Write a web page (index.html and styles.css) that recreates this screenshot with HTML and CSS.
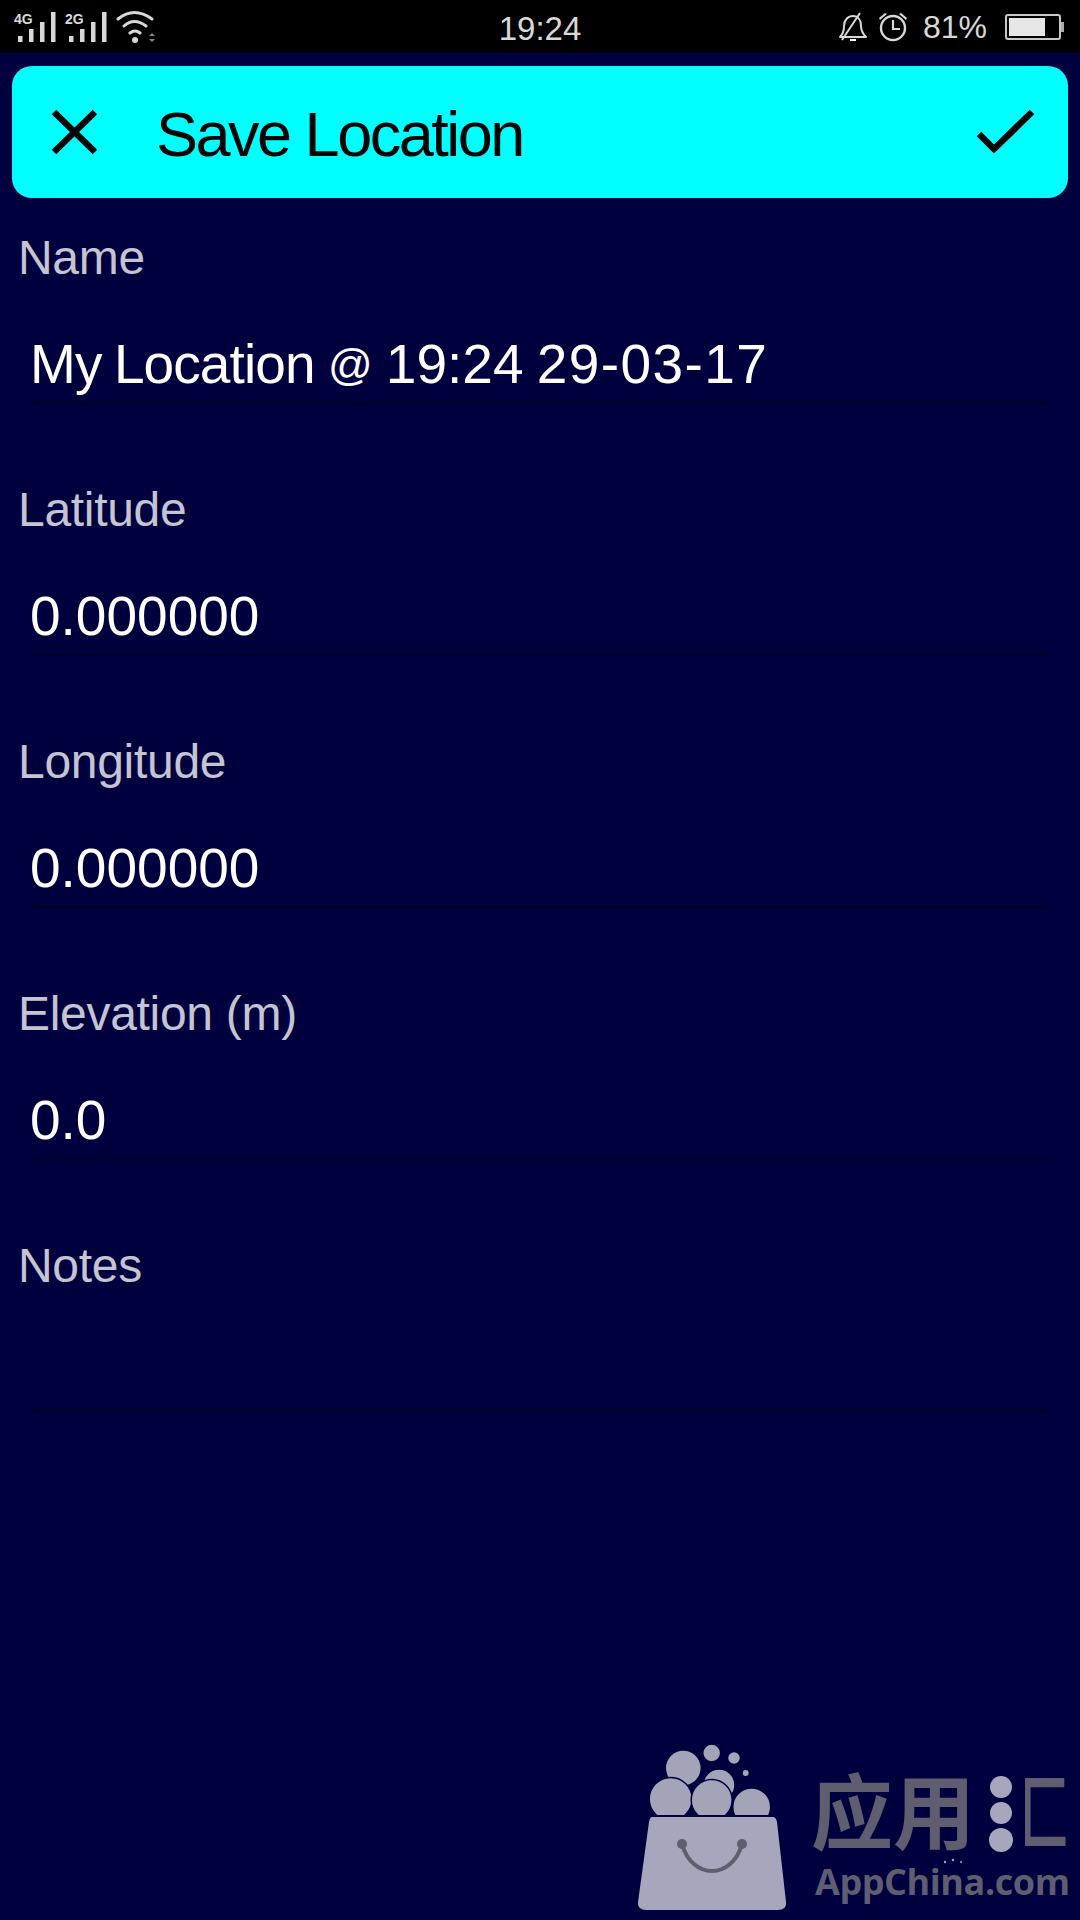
FILE: index.html
```html
<!DOCTYPE html>
<html lang="en">
<head>
  <meta charset="UTF-8">
  <meta name="viewport" content="width=device-width, initial-scale=1.0">
  <title>Save Location</title>
  <link rel="stylesheet" href="styles.css">
</head>
<body>

<div class="statusbar">
  <div class="status-left">
    <svg class="signal" width="44" height="34" viewBox="0 0 44 34">
      <text x="0" y="13" class="net-label">4G</text>
      <path d="M4 25h4.500v6H4zM15 18h4.500v13H15zM26 11h4.500v20H26zM37 1h4.500v30H37z" fill="#d8d8d8"/>
    </svg>
    <svg class="signal" width="44" height="34" viewBox="0 0 44 34">
      <text x="0" y="13" class="net-label">2G</text>
      <path d="M4 25h4.500v6H4zM15 18h4.500v13H15zM26 11h4.500v20H26zM37 1h4.500v30H37z" fill="#d8d8d8"/>
    </svg>
    <svg class="wifi" width="42" height="36" viewBox="0 0 42 36">
      <path d="M2 10Q18 -3 36 10M8 17Q18 8 30 17M14 24Q19 20 24 24" fill="none" stroke="#d8d8d8" stroke-width="3" stroke-linecap="round"/>
      <circle cx="19" cy="31" r="3" fill="#d8d8d8"/>
      <path d="M33 27l3-3 3 3zM33 30l3 3 3-3z" fill="#888"/>
    </svg>
  </div>
  <div class="status-time">19:24</div>
  <div class="status-right">
    <svg width="30" height="32" viewBox="0 0 30 32">
      <path d="M2 26c3-3 4-6 4-11 0-6 4-10 9-10s8 4 8 10c0 5 2 8 5 11z" fill="none" stroke="#d8d8d8" stroke-width="2" stroke-linejoin="round"/>
      <path d="M4 29L22 2" stroke="#d8d8d8" stroke-width="2"/>
      <path d="M12 29h6" stroke="#fff" stroke-width="2"/>
    </svg>
    <svg class="alarm" width="30" height="32" viewBox="0 0 30 32">
      <circle cx="15" cy="17" r="12" fill="none" stroke="#d8d8d8" stroke-width="2.4"/>
      <path d="M15 9v9h7" fill="none" stroke="#d8d8d8" stroke-width="2.2"/>
      <path d="M1 7l6-5 2 1-7 6zM29 7l-6-5-2 1 7 6z" fill="#d8d8d8"/>
    </svg>
    <span class="battery-text">81%</span>
    <div class="battery"><div class="battery-level" style="width: 75%"></div></div>
    <div class="battery-nib"></div>
  </div>
</div>

<div class="toolbar">
  <svg class="toolbar-close" width="47" height="46" viewBox="0 0 47 46">
    <path d="M3 3L44 43M44 3L3 43" fill="none" stroke="#050505" stroke-width="6.5"/>
  </svg>
  <h1 class="toolbar-title">Save Location</h1>
  <svg class="toolbar-done" width="60" height="46" viewBox="0 0 60 46">
    <path d="M3 25L18 40L56 3" fill="none" stroke="#050505" stroke-width="6.5"/>
  </svg>
</div>

<form class="form">
  <div class="field">
    <label class="field-label">Name</label>
    <div class="field-value name-value"><span class="tight">My Location</span> <span class="small-at">@</span> 19:24 <span class="wide">29-03-17</span></div>
  </div>
  <div class="field">
    <label class="field-label">Latitude</label>
    <div class="field-value">0.000000</div>
  </div>
  <div class="field">
    <label class="field-label">Longitude</label>
    <div class="field-value">0.000000</div>
  </div>
  <div class="field">
    <label class="field-label">Elevation (m)</label>
    <div class="field-value">0.0</div>
  </div>
  <div class="field">
    <label class="field-label">Notes</label>
    <div class="field-value"></div>
  </div>
</form>

<!-- site watermark, sits over the bottom corner -->
<svg class="watermark" width="460" height="190" viewBox="0 0 460 190">
  <defs>
    <clipPath id="bubble-clip"><rect x="0" y="0" width="200" height="85"/></clipPath>
  </defs>
  <g fill="#a4a4b8" stroke="#00003f" stroke-width="1.5" clip-path="url(#bubble-clip)">
    <circle cx="91.7" cy="23" r="9"/>
    <circle cx="114" cy="28" r="6.500"/>
    <circle cx="125.700" cy="43" r="3.700"/>
    <circle cx="63.300" cy="38" r="18"/>
    <circle cx="99" cy="55" r="16"/>
    <circle cx="131.700" cy="77" r="19"/>
    <circle cx="50.700" cy="69" r="21.500"/>
    <circle cx="91.700" cy="70" r="20.500"/>
  </g>
  <path d="M32 87H153Q156 87 157 92L166 172Q167 180 158 180H27Q17 180 18 172L29 92Q30 87 32 87z" fill="#a6a6bc"/>
  <path d="M62 114C72 150 112 150 122 114" fill="none" stroke="#5e5e70" stroke-width="4"/>
  <circle cx="62" cy="114" r="5" fill="#5e5e70"/>
  <circle cx="122" cy="114" r="5" fill="#5e5e70"/>
  <text x="191" y="113" class="wm-cjk">应用</text>
  <text transform="translate(400 113) scale(0.6 1)" class="wm-cjk">匚</text>
  <g fill="#a6a6bc">
    <circle cx="381" cy="57" r="11"/>
    <circle cx="381" cy="83" r="11"/>
    <circle cx="381" cy="110" r="12"/>
    <circle cx="325" cy="132" r="1.200"/>
    <circle cx="333" cy="130" r="1.200"/>
    <circle cx="341" cy="132" r="1"/>
  </g>
  <text x="195" y="165" class="wm-latin" textLength="255">AppChina.com</text>
</svg>

</body>
</html>
```

FILE: styles.css
```css
body {
    font-family: "Liberation Sans", Arial, sans-serif;
    margin: 0;
    padding: 0;
    width: 1080px;
    height: 1920px;
    overflow: hidden;
    position: relative;
    background: #00003f;
}

/* status bar */
.statusbar {
    display: grid;
    grid-template-columns: 1fr auto 1fr;
    align-items: center;
    height: 53px;
    background: #000;
    color: #d8d8d8;
}

.status-left {
    display: flex;
    align-items: center;
    gap: 7px;
    padding-left: 14px;
}

.signal {
    margin-top: 2px;
}

.net-label {
    font-size: 14px;
    font-weight: bold;
    fill: #d8d8d8;
}

.status-time {
    font-size: 33px;
    margin-top: 4px;
}

.status-right {
    display: flex;
    align-items: center;
    justify-content: flex-end;
    padding-right: 16px;
}

.alarm {
    margin-left: 10px;
}

.battery-text {
    font-size: 32px;
    margin-left: 15px;
    margin-top: 2px;
}

.battery {
    box-sizing: border-box;
    width: 56px;
    height: 26px;
    margin-left: 18px;
    border: 2px solid #c8c8c8;
    border-radius: 3px;
    padding: 2px;
}

.battery-level {
    height: 100%;
    background: #e6e6e6;
}

.battery-nib {
    width: 3px;
    height: 10px;
    background: #aaa;
}

/* toolbar */
.toolbar {
    display: flex;
    align-items: center;
    height: 132px;
    margin: 13px 12px 0;
    padding: 0 32px 0 39px;
    background: #00ffff;
    border-radius: 20px;
}

.toolbar-title {
    flex: 1;
    margin: 3px 0 0 58px;
    font-size: 63px;
    font-weight: normal;
    letter-spacing: -2.5px;
    color: #050505;
}

/* form */
.form {
    padding-top: 30px;
}

.field {
    height: 252px;
    box-sizing: border-box;
}

.field-label {
    display: block;
    margin-left: 18px;
    font-size: 48px;
    line-height: 60px;
    letter-spacing: -0.3px;
    color: #c4c4d2;
}

.field-value {
    box-sizing: border-box;
    height: 108px;
    margin: 8px 30px 0;
    padding-top: 36px;
    font-size: 55px;
    line-height: 64px;
    color: #fff;
    border-bottom: 2px solid #000026;
}

/* the name value runs narrower on letters, wider on digits */
.name-value {
    word-spacing: -2px;
}

.tight {
    letter-spacing: -0.9px;
}

.small-at {
    font-size: 44px;
    vertical-align: 3px;
}

.wide {
    letter-spacing: 1.4px;
}

/* watermark */
.watermark {
    position: absolute;
    left: 620px;
    top: 1730px;
}

.wm-cjk {
    font-family: "Noto Sans CJK SC", sans-serif;
    font-size: 82px;
    font-weight: bold;
    fill: #5e5e70;
}

.wm-latin {
    font-family: "Open Sans", sans-serif;
    font-size: 36px;
    font-weight: bold;
    fill: #5e5e70;
}
```
